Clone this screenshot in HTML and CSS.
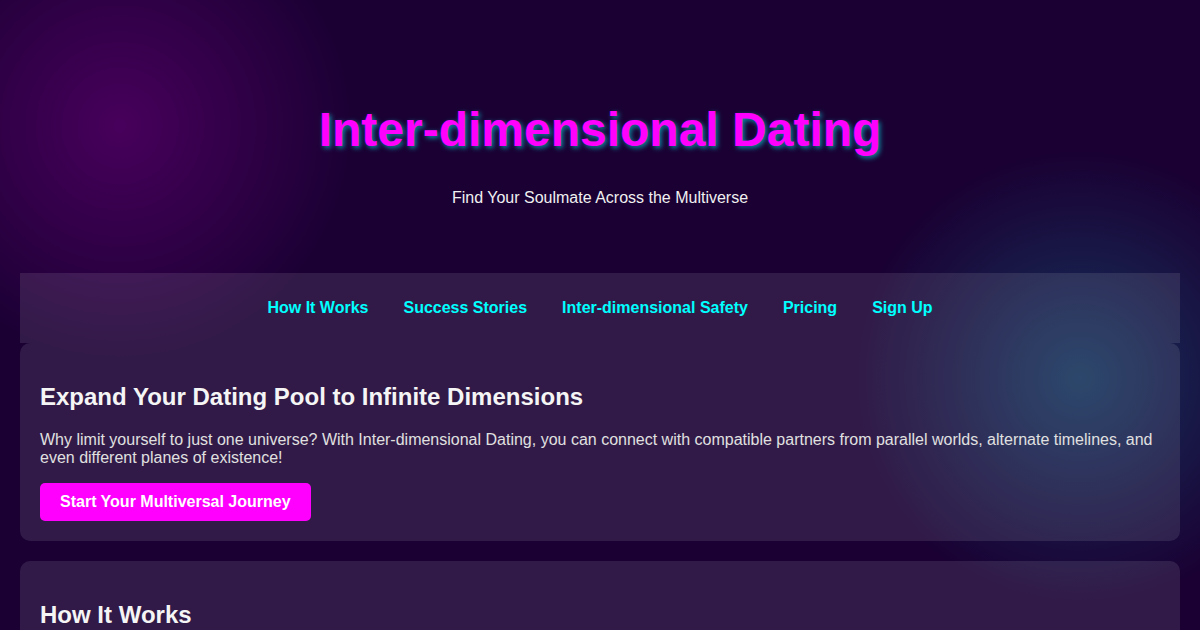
FILE: index.html
```html
<!DOCTYPE html>
<html lang="en">
<head>
  <meta charset="UTF-8" />
  <meta name="viewport" content="width=device-width, initial-scale=1.0" />
  <title>Inter-dimensional Dating</title>
  <link rel="stylesheet" href="styles.css">
</head>
<body>
  <header>
    <h1>Inter-dimensional Dating</h1>
    <p>Find Your Soulmate Across the Multiverse</p>
  </header>
  <nav>
    <a href="#how">How It Works</a>
    <a href="#stories">Success Stories</a>
    <a href="#safety">Inter-dimensional Safety</a>
    <a href="#pricing">Pricing</a>
    <a href="#signup">Sign Up</a>
  </nav>
  <main>
    <section class="card">
      <h2>Expand Your Dating Pool to Infinite Dimensions</h2>
      <p>Why limit yourself to just one universe? With Inter-dimensional Dating, you can connect with compatible partners from parallel worlds, alternate timelines, and even different planes of existence!</p>
      <button class="cta">Start Your Multiversal Journey</button>
    </section>
    <section class="card" id="how">
      <h2>How It Works</h2>
      <p>Our quantum matchmaking engine scans every reachable reality to find the one who was made for you.</p>
    </section>
  </main>
</body>
</html>
```

FILE: styles.css
```css
* { box-sizing: border-box; }
html, body { margin: 0; }
body {
  padding: 20px;
  font-family: "Liberation Sans", Arial, sans-serif;
  color: #e0e0e0;
  background:
    radial-gradient(circle at 10% 20%, rgba(255,0,255,0.2) 0%, transparent 20%),
    radial-gradient(circle at 90% 60%, rgba(0,255,255,0.2) 0%, transparent 20%),
    #1a0033;
  background-attachment: fixed;
}
header { padding: 50px; text-align: center; }
header h1 {
  margin: 0.67em 0;
  font-size: 48px;
  color: #ff00ff;
  text-shadow: 2px 2px 5px rgba(0,255,255,0.55);
}
header p { margin: 16px 0; font-size: 16px; color: #f0f0f0; }
nav {
  display: flex; justify-content: center; gap: 35px;
  padding: 26px 0;
  background: rgba(255,255,255,0.1);
}
nav a { color: #0ff; font-weight: bold; text-decoration: none; font-size: 16px; }
.card {
  background: rgba(255,255,255,0.1);
  border-radius: 10px;
  padding: 20px;
  margin-bottom: 20px;
}
.card h2 { font-size: 24px; margin: 20px 0; color: #f5f5f5; }
.card p { margin: 16px 0; line-height: 18px; }
.cta {
  padding: 10px 20px; font-size: 16px; font-weight: bold;
  font-family: inherit;
  background: #ff00ff; color: #fff; border: none; border-radius: 5px; cursor: pointer;
}
```
